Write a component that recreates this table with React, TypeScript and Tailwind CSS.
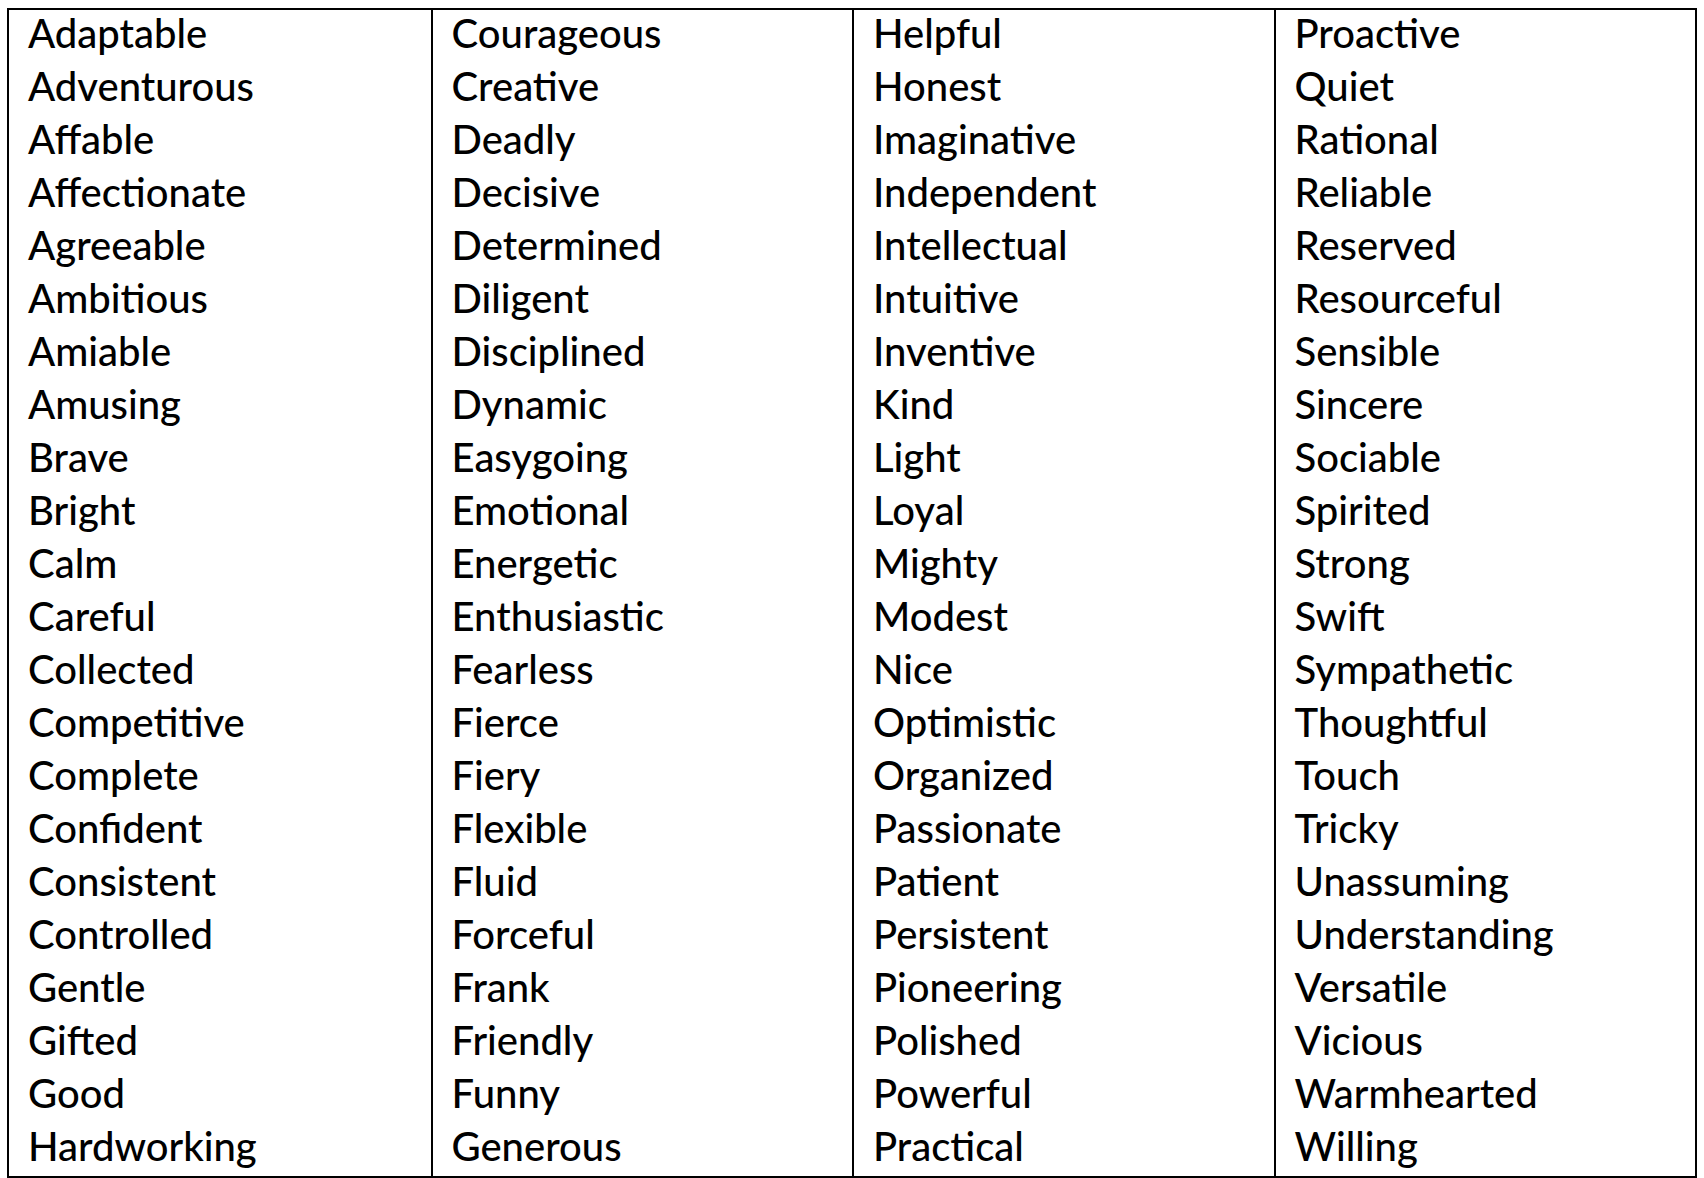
import React from 'react';

const columns: string[][] = [
  ['Adaptable', 'Adventurous', 'Affable', 'Affectionate', 'Agreeable', 'Ambitious', 'Amiable', 'Amusing', 'Brave', 'Bright', 'Calm', 'Careful', 'Collected', 'Competitive', 'Complete', 'Confident', 'Consistent', 'Controlled', 'Gentle', 'Gifted', 'Good', 'Hardworking'],
  ['Courageous', 'Creative', 'Deadly', 'Decisive', 'Determined', 'Diligent', 'Disciplined', 'Dynamic', 'Easygoing', 'Emotional', 'Energetic', 'Enthusiastic', 'Fearless', 'Fierce', 'Fiery', 'Flexible', 'Fluid', 'Forceful', 'Frank', 'Friendly', 'Funny', 'Generous'],
  ['Helpful', 'Honest', 'Imaginative', 'Independent', 'Intellectual', 'Intuitive', 'Inventive', 'Kind', 'Light', 'Loyal', 'Mighty', 'Modest', 'Nice', 'Optimistic', 'Organized', 'Passionate', 'Patient', 'Persistent', 'Pioneering', 'Polished', 'Powerful', 'Practical'],
  ['Proactive', 'Quiet', 'Rational', 'Reliable', 'Reserved', 'Resourceful', 'Sensible', 'Sincere', 'Sociable', 'Spirited', 'Strong', 'Swift', 'Sympathetic', 'Thoughtful', 'Touch', 'Tricky', 'Unassuming', 'Understanding', 'Versatile', 'Vicious', 'Warmhearted', 'Willing'],
];

const App: React.FC = () => {
  return (
    <div className="min-h-screen bg-white pl-[7px] pt-[8px]">
      <div className="grid w-[1690px] grid-cols-4 border-2 border-black text-black font-['Lato',sans-serif] text-[40px] font-medium">
        {columns.map((words, i) => (
          <div key={i} className={i > 0 ? 'border-l-2 border-black pl-[19px]' : 'pl-[19px]'}>
            {words.map((w) => (
              <div key={w} className="flex h-[53px] items-center pb-[8px] leading-none">
                {w}
              </div>
            ))}
          </div>
        ))}
      </div>
    </div>
  );
};

export default App;
